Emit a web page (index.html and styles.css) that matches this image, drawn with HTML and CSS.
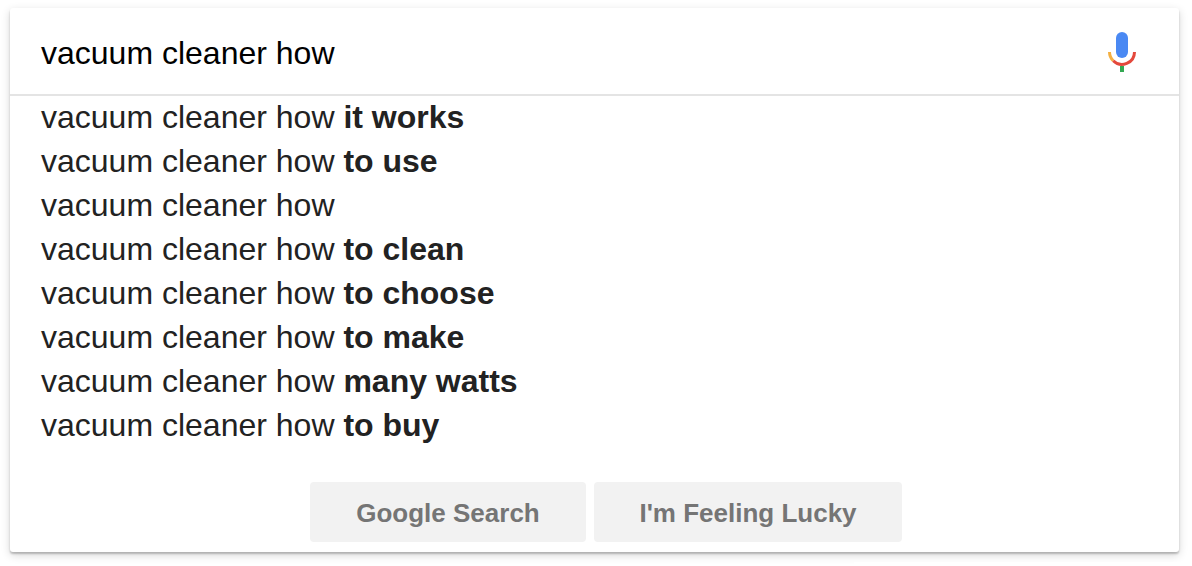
FILE: index.html
```html
<!DOCTYPE html>
<html lang="en">
<head>
<meta charset="utf-8">
<title>vacuum cleaner how</title>
<link rel="stylesheet" href="styles.css">
</head>
<body>
<div class="card">
  <div class="search">
    <span class="query">vacuum cleaner how</span>
    <svg class="mic" width="30" height="42" viewBox="0 0 30 42">
      <rect x="9" y="0" width="12" height="26" rx="6" fill="#4a89f3"/>
      <path d="M2.500 20A12.500 12.500 0 0 0 6.200 28.800" fill="none" stroke="#f4b042" stroke-width="3"/>
      <path d="M6.200 28.800A12.500 12.500 0 0 0 27.500 20" fill="none" stroke="#e4483c" stroke-width="3"/>
      <rect x="13" y="34" width="4" height="6" fill="#34a853"/>
    </svg>
  </div>
  <ul class="list">
    <li>vacuum cleaner how <b>it works</b></li>
    <li>vacuum cleaner how <b>to use</b></li>
    <li>vacuum cleaner how</li>
    <li>vacuum cleaner how <b>to clean</b></li>
    <li>vacuum cleaner how <b>to choose</b></li>
    <li>vacuum cleaner how <b>to make</b></li>
    <li>vacuum cleaner how <b>many watts</b></li>
    <li>vacuum cleaner how <b>to buy</b></li>
  </ul>
  <div class="buttons">
    <button class="btn btn-search">Google Search</button>
    <button class="btn btn-lucky">I'm Feeling Lucky</button>
  </div>
</div>
<div class="below"></div>
</body>
</html>
```
FILE: styles.css
```css
html, body { margin: 0; padding: 0; background: #fff; }
body { width: 1192px; height: 566px; overflow: hidden; padding: 8px 0 0 10px; box-sizing: border-box; font-family: "Liberation Sans", Arial, sans-serif; }
.card { width: 1169px; height: 544px; background: #fff; border-radius: 3px; box-shadow: 0 2px 2px rgba(0,0,0,.22), 0 3px 10px rgba(0,0,0,.16); display: flex; flex-direction: column; position: relative; z-index: 1; }
.search { height: 86px; border-bottom: 2px solid #e4e4e4; display: flex; align-items: center; justify-content: space-between; padding: 0 42px 0 31px; flex: none; }
.query { font-size: 32px; color: #000; margin-top: 4px; }
.mic { display: block; margin-top: 4px; }
.list { list-style: none; margin: -1px 0 0; padding: 0; flex: none; }
.list li { height: 44px; line-height: 44px; font-size: 32px; padding-left: 31px; color: #222; }
.list b { font-weight: 700; }
.buttons { display: flex; justify-content: center; gap: 8px; margin-top: 35px; padding-left: 23px; }
.btn { height: 60px; border: 0; border-radius: 4px; background: #f2f2f2; color: #757575; font: 700 26px "Liberation Sans", Arial, sans-serif; padding: 2px 0 0; }
.btn-search { width: 276px; }
.btn-lucky { width: 308px; }
.below { position: absolute; left: 854px; top: 562px; width: 325px; height: 10px; background: #fff; z-index: 2; }
```
